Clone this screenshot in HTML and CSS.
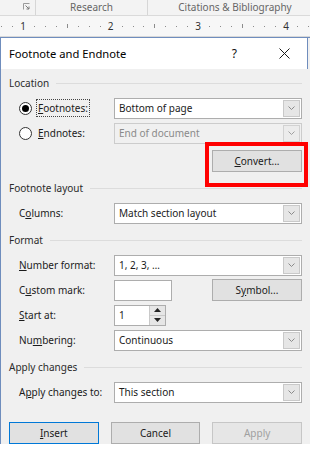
FILE: index.html
```html
<!DOCTYPE html>
<html lang="en">
<head>
  <meta charset="UTF-8" />
  <title>Footnote and Endnote</title>
  <meta name="viewport" content="width=device-width, initial-scale=1.0" />
  <link rel="stylesheet" href="styles.css">
</head>
<body>
  <div class="ribbon">
    <div class="ribbon-cell launcher-cell">
      <svg class="launcher" width="7" height="7" viewBox="0 0 7 7">
        <path d="M0.5 6.5V0.5H6.5" fill="none" stroke="#9a9a9a" />
        <path d="M2.5 2.5L6 6M6 3.5V6H3.5" fill="none" stroke="#7a7a7a" />
      </svg>
    </div>
    <div class="ribbon-cell research">Research</div>
    <div class="ribbon-cell citations">Citations &amp; Bibliography</div>
  </div>

  <div class="ruler">
    <svg width="310" height="20" viewBox="0 0 310 20">
      <g fill="#8c8c8c">
        <rect x="1" y="10" width="1" height="1" />
        <rect x="12" y="10" width="1" height="1" />
        <rect x="34" y="10" width="1" height="1" />
        <rect x="45" y="10" width="1" height="1" />
        <rect x="56" y="10" width="1" height="1" />
        <rect x="67" y="8" width="1" height="4" />
        <rect x="78" y="10" width="1" height="1" />
        <rect x="89" y="10" width="1" height="1" />
        <rect x="100" y="10" width="1" height="1" />
        <rect x="122" y="10" width="1" height="1" />
        <rect x="133" y="10" width="1" height="1" />
        <rect x="143" y="10" width="1" height="1" />
        <rect x="154" y="8" width="1" height="4" />
        <rect x="165" y="10" width="1" height="1" />
        <rect x="176" y="10" width="1" height="1" />
        <rect x="187" y="10" width="1" height="1" />
        <rect x="209" y="10" width="1" height="1" />
        <rect x="220" y="10" width="1" height="1" />
        <rect x="231" y="10" width="1" height="1" />
        <rect x="242" y="8" width="1" height="4" />
        <rect x="253" y="10" width="1" height="1" />
        <rect x="264" y="10" width="1" height="1" />
        <rect x="275" y="10" width="1" height="1" />
        <rect x="297" y="10" width="1" height="1" />
        <rect x="308" y="10" width="1" height="1" />
      </g>
      <g class="ruler-num">
        <text x="23" y="14">1</text>
        <text x="110.5" y="14">2</text>
        <text x="198" y="14">3</text>
        <text x="286" y="14">4</text>
      </g>
    </svg>
  </div>

  <div class="dialog">
    <div class="titlebar">
      <span class="title">Footnote and Endnote</span>
      <span class="help">?</span>
      <svg class="close" width="11" height="11" viewBox="0 0 11 11">
        <path d="M0.5 0.5L10.5 10.5M10.5 0.5L0.5 10.5" stroke="#1a1a1a" stroke-width="1" />
      </svg>
    </div>

    <div class="dialog-body">
      <div class="group-head"><span>Location</span></div>
      <div class="rows">
        <div class="row">
          <div class="label radio-wrap">
            <span class="radio checked"></span>
            <span class="focus"><u>F</u>ootnotes:</span>
          </div>
          <div class="select">
            <span class="select-text">Bottom of page</span>
            <span class="select-btn"><svg width="7" height="4" viewBox="0 0 7 4"><path d="M0.5 0.5L3.5 3.5L6.5 0.5" fill="none" stroke="#8a8a8a" /></svg></span>
          </div>
        </div>
        <div class="row">
          <div class="label radio-wrap">
            <span class="radio"></span>
            <span class="radio-text"><u>E</u>ndnotes:</span>
          </div>
          <div class="select disabled">
            <span class="select-text">End of document</span>
            <span class="select-btn"><svg width="7" height="4" viewBox="0 0 7 4"><path d="M0.5 0.5L3.5 3.5L6.5 0.5" fill="none" stroke="#a0a0a0" /></svg></span>
          </div>
        </div>
        <div class="row row-right convert-row">
          <button class="btn"><u>C</u>onvert...</button>
          <div class="highlight"></div>
        </div>
      </div>

      <div class="group-head"><span>Footnote layout</span></div>
      <div class="rows">
        <div class="row">
          <div class="label">C<u>o</u>lumns:</div>
          <div class="select">
            <span class="select-text">Match section layout</span>
            <span class="select-btn"><svg width="7" height="4" viewBox="0 0 7 4"><path d="M0.5 0.5L3.5 3.5L6.5 0.5" fill="none" stroke="#8a8a8a" /></svg></span>
          </div>
        </div>
      </div>

      <div class="group-head"><span>Format</span></div>
      <div class="rows">
        <div class="row">
          <div class="label"><u>N</u>umber format:</div>
          <div class="select">
            <span class="select-text">1, 2, 3, …</span>
            <span class="select-btn"><svg width="7" height="4" viewBox="0 0 7 4"><path d="M0.5 0.5L3.5 3.5L6.5 0.5" fill="none" stroke="#8a8a8a" /></svg></span>
          </div>
        </div>
        <div class="row">
          <div class="label">C<u>u</u>stom mark:</div>
          <div class="textbox mark"></div>
          <div class="spacer"></div>
          <button class="btn">S<u>y</u>mbol...</button>
        </div>
        <div class="row">
          <div class="label"><u>S</u>tart at:</div>
          <div class="textbox spin">
            <span class="spin-text">1</span>
            <span class="spin-btns">
              <span class="spin-btn"><svg width="7" height="4" viewBox="0 0 7 4"><path d="M0 4L3.5 0L7 4Z" fill="#222" /></svg></span>
              <span class="spin-btn"><svg width="7" height="4" viewBox="0 0 7 4"><path d="M0 0L3.5 4L7 0Z" fill="#222" /></svg></span>
            </span>
          </div>
        </div>
        <div class="row">
          <div class="label">Nu<u>m</u>bering:</div>
          <div class="select">
            <span class="select-text">Continuous</span>
            <span class="select-btn"><svg width="7" height="4" viewBox="0 0 7 4"><path d="M0.5 0.5L3.5 3.5L6.5 0.5" fill="none" stroke="#8a8a8a" /></svg></span>
          </div>
        </div>
      </div>

      <div class="group-head"><span>Apply changes</span></div>
      <div class="rows">
        <div class="row">
          <div class="label">A<u>p</u>ply changes to:</div>
          <div class="select">
            <span class="select-text">This section</span>
            <span class="select-btn"><svg width="7" height="4" viewBox="0 0 7 4"><path d="M0.5 0.5L3.5 3.5L6.5 0.5" fill="none" stroke="#8a8a8a" /></svg></span>
          </div>
        </div>
      </div>

      <div class="actions">
        <button class="btn default"><u>I</u>nsert</button>
        <button class="btn">Cancel</button>
        <button class="btn" disabled>Apply</button>
      </div>
    </div>
  </div>
</body>
</html>
```

FILE: styles.css
```css
:root {
  --dialog-bg: #f0f0f0;
  --border: #adadad;
  --line: #dcdcdc;
  --text: #1b1b1b;
  --blue: #0078d7;
}

body {
  margin: 0;
  width: 310px;
  height: 455px;
  overflow: hidden;
  font-family: "Segoe UI", "Noto Sans", sans-serif;
  font-size: 10px;
  color: var(--text);
  background: #fff;
}

/* Word ribbon strip behind the dialog */
.ribbon {
  display: flex;
  height: 15px;
  background: #f3f3f3;
  border-bottom: 1px solid #dadada;
  overflow: hidden;
  white-space: nowrap;
  color: #666;
  font-size: 10px;
  line-height: 14px;
}

.ribbon-cell {
  flex: none;
  text-align: center;
}

.launcher-cell {
  width: 35px;
  display: flex;
  align-items: flex-start;
  padding-top: 3px;
  padding-left: 23px;
  box-sizing: border-box;
}

.research {
  width: 111px;
  border-left: 1px solid #d6d6d6;
}

.citations {
  width: 174px;
  border-left: 1px solid #d6d6d6;
}

.ruler {
  height: 20px;
  background: #f7f7f7;
  border-bottom: 1px solid #d8d8d8;
}

.ruler svg {
  display: block;
}

.ruler-num text {
  font-family: "Segoe UI", "Noto Sans", sans-serif;
  font-size: 10px;
  fill: #333;
  text-anchor: middle;
}

/* Dialog */
.dialog {
  border-left: 1px solid #6f8dbd;
  border-top: 1px solid #6f8dbd;
  background: var(--dialog-bg);
}

.titlebar {
  display: flex;
  align-items: center;
  height: 31px;
  background: #fff;
  border-right: 1px solid #6f8dbd;
  padding-left: 8px;
  margin-right: 2px;
}

.title {
  flex: 1;
  font-size: 11.2px;
  color: #000;
}

.help {
  font-size: 12px;
  color: #111;
  margin-right: 42px;
}

.close {
  margin-right: 17px;
}

.dialog-body {
  padding: 6px 8px 0 8px;
}

.group-head {
  display: flex;
  align-items: center;
  height: 16px;
  margin-bottom: 6px;
  color: #2b2b2b;
}

.group-head::after {
  content: "";
  flex: 1;
  height: 1px;
  margin-left: 7px;
  background: var(--line);
}

.rows {
  display: flex;
  flex-direction: column;
  gap: 3px;
  padding-left: 10px;
  margin-bottom: 8px;
}

.row {
  display: flex;
  align-items: center;
  height: 22px;
}

.row-right {
  justify-content: flex-end;
}

.label {
  width: 95px;
  flex: none;
}

.radio-wrap {
  display: flex;
  align-items: center;
  gap: 5px;
}

.radio {
  width: 11px;
  height: 11px;
  border: 1px solid #333;
  border-radius: 50%;
  background: #fff;
  display: flex;
  align-items: center;
  justify-content: center;
}

.radio.checked::after {
  content: "";
  width: 7px;
  height: 7px;
  border-radius: 50%;
  background: #000;
}

.focus {
  outline: 1px dotted #444;
  outline-offset: 0;
  padding: 1px 1px;
}

.radio-text {
  padding: 0 1px;
}

.select {
  flex: 1;
  display: flex;
  height: 21px;
  box-sizing: border-box;
  border: 1px solid var(--border);
  background: #fff;
}

.select-text {
  flex: 1;
  padding-left: 4px;
  line-height: 19px;
  white-space: nowrap;
}

.select-btn {
  width: 15px;
  margin: 1px;
  border: 1px solid #c9c9c9;
  background: #e6e6e6;
  display: flex;
  align-items: center;
  justify-content: center;
}

.select.disabled {
  background: #f0f0f0;
  border-color: #cccccc;
  color: #8a8a8a;
}

.select.disabled .select-btn {
  background: #ececec;
  border-color: #d2d2d2;
}

.textbox {
  height: 21px;
  box-sizing: border-box;
  border: 1px solid var(--border);
  background: #fff;
}

.mark {
  width: 58px;
}

.spacer {
  flex: 1;
}

.spin {
  width: 52px;
  display: flex;
}

.spin-text {
  flex: 1;
  padding-left: 4px;
  line-height: 19px;
}

.spin-btns {
  width: 15px;
  display: flex;
  flex-direction: column;
  border-left: 1px solid #c9c9c9;
}

.spin-btn {
  flex: 1;
  display: flex;
  align-items: center;
  justify-content: center;
  background: #e6e6e6;
}

.spin-btn + .spin-btn {
  border-top: 1px solid #c9c9c9;
}

.btn {
  width: 90px;
  height: 22px;
  padding: 0;
  font: inherit;
  color: var(--text);
  background: #e1e1e1;
  border: 1px solid var(--border);
}

.btn.default {
  border-color: var(--blue);
}

.btn:disabled {
  color: #a0a0a0;
  background: #e6e6e6;
  border-color: #c6c6c6;
}

.convert-row {
  position: relative;
  margin-top: 3px;
}

/* red annotation box drawn over the screenshot */
.highlight {
  position: absolute;
  right: -6px;
  top: -8px;
  width: 103px;
  height: 45px;
  border: 4px solid #f00;
  box-sizing: border-box;
}

.actions {
  display: grid;
  grid-template-columns: repeat(3, 1fr);
  gap: 12px;
  margin-top: 19px;
}

.actions .btn {
  width: 100%;
}
```
